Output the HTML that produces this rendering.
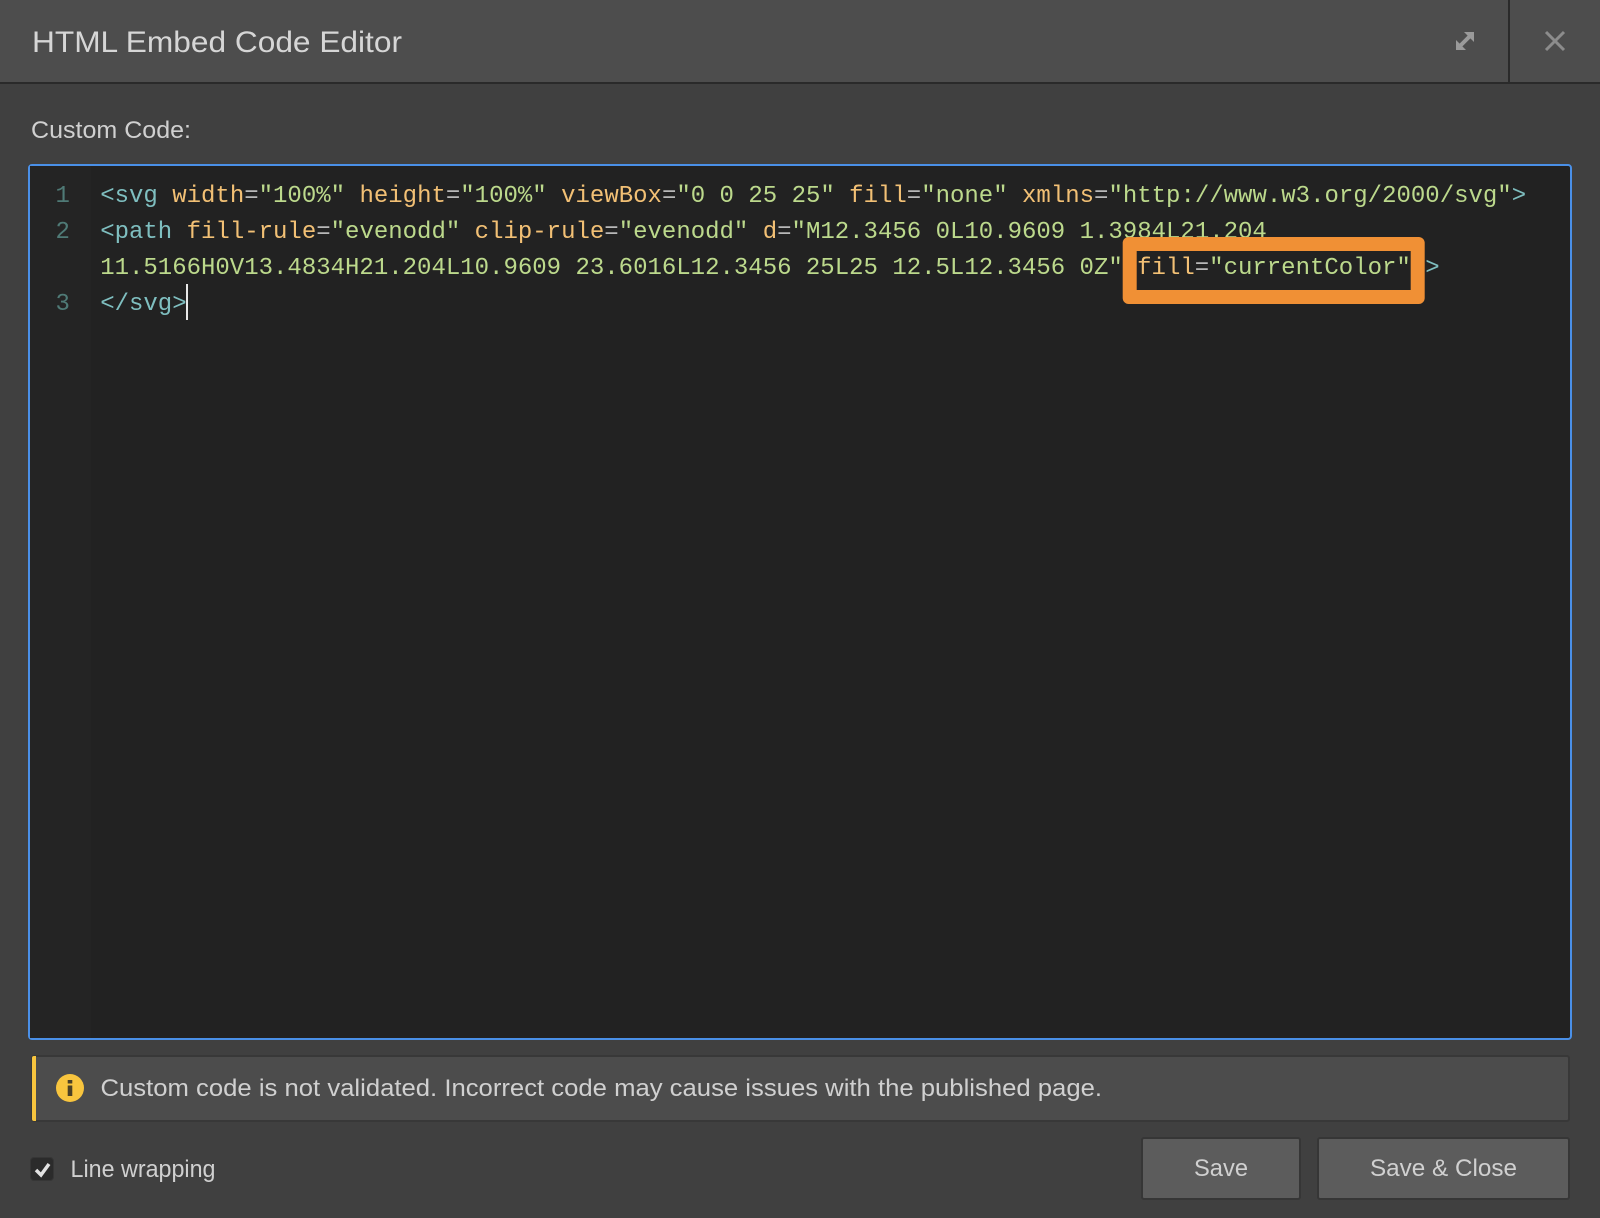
<!DOCTYPE html>
<html lang="en">
<head>
<meta charset="utf-8">
<title>HTML Embed Code Editor</title>
<style>
html,body{margin:0;padding:0;background:#404040;width:1600px;height:1218px;overflow:hidden}
.a{position:absolute;box-sizing:border-box}
svg{position:absolute;left:0;top:0}
text{white-space:pre}
.s{font-family:"Liberation Sans",sans-serif;font-size:24px;fill:#d0d0d0}
.m{font-family:"Liberation Mono",monospace;font-size:24px;fill:#bcd98c}
.t{fill:#7fbfc0}.k{fill:#f2c075}.e{fill:#b8b8b8}.n{fill:#4f7a76}
</style>
</head>
<body>
<div class="a" style="left:0;top:0;width:1600px;height:1218px;background:#404040"></div>
<div class="a" style="left:0;top:0;width:1600px;height:84px;background:#4d4d4d;border-bottom:2px solid #2a2a2a"></div>
<div class="a" style="left:1508px;top:0;width:2px;height:82px;background:#2a2a2a"></div>
<div class="a" style="left:28px;top:164px;width:1544px;height:876px;background:#222;border:2px solid #4a90e8;border-radius:4px"></div>
<div class="a" style="left:30px;top:166px;width:61px;height:872px;background:#242424"></div>
<div class="a" style="left:31px;top:1055px;width:1539px;height:67px;background:#4c4c4c;border:2px solid #383838;border-radius:3px"></div>
<div class="a" style="left:32px;top:1056px;width:4px;height:65px;background:#f8c53e;border-radius:2px 0 0 2px"></div>
<div class="a" style="left:1141px;top:1137px;width:160px;height:63px;background:#5c5c5c;border:2px solid #363636;border-radius:3px"></div>
<div class="a" style="left:1317px;top:1137px;width:253px;height:63px;background:#5c5c5c;border:2px solid #363636;border-radius:3px"></div>
<div class="a" style="left:30px;top:1157px;width:24px;height:24px;background:#2b2b2b;border:1px solid #363636;border-radius:4px"></div>
<svg width="1600" height="1218" viewBox="0 0 1600 1218" xmlns="http://www.w3.org/2000/svg">
  <text class="s" x="32" y="52" style="font-size:30px;fill:#d6d6d6" textLength="370" lengthAdjust="spacingAndGlyphs">HTML Embed Code Editor</text>
  <text class="s" x="31" y="138" textLength="160" lengthAdjust="spacingAndGlyphs">Custom Code:</text>

  <path d="M1459.500 46.500L1470.500 35.500" stroke="#9a9a9a" stroke-width="4" fill="none"/>
  <path d="M1456 40V50H1466ZM1464 32H1474V42Z" fill="#9a9a9a"/>
  <path d="M1546 32L1564 50M1564 32L1546 50" stroke="#8c8c8c" stroke-width="3" fill="none"/>

  <text class="m n" x="55.500" y="202">1</text>
  <text class="m n" x="55.500" y="238">2</text>
  <text class="m n" x="55.500" y="310">3</text>

  <text class="m" x="100.200" y="202"><tspan class="t">&lt;svg</tspan> <tspan class="k">width</tspan><tspan class="e">=</tspan>"100%" <tspan class="k">height</tspan><tspan class="e">=</tspan>"100%" <tspan class="k">viewBox</tspan><tspan class="e">=</tspan>"0 0 25 25" <tspan class="k">fill</tspan><tspan class="e">=</tspan>"none" <tspan class="k">xmlns</tspan><tspan class="e">=</tspan>"http://www.w3.org/2000/svg"<tspan class="t">&gt;</tspan></text>
  <text class="m" x="100.200" y="238"><tspan class="t">&lt;path</tspan> <tspan class="k">fill-rule</tspan><tspan class="e">=</tspan>"evenodd" <tspan class="k">clip-rule</tspan><tspan class="e">=</tspan>"evenodd" <tspan class="k">d</tspan><tspan class="e">=</tspan>"M12.3456 0L10.9609 1.3984L21.204</text>
  <text class="m" x="100.200" y="274">11.5166H0V13.4834H21.204L10.9609 23.6016L12.3456 25L25 12.5L12.3456 0Z" <tspan class="k">fill</tspan><tspan class="e">=</tspan>"currentColor" <tspan class="t">&gt;</tspan></text>
  <text class="m" x="100.200" y="310"><tspan class="t">&lt;/svg&gt;</tspan></text>
  <rect x="186" y="284" width="2" height="36" fill="#e8e8e8"/>

  <path fill-rule="evenodd" d="M1128.700 237H1418.700A6 6 0 0 1 1424.700 243V298A6 6 0 0 1 1418.700 304H1128.700A6 6 0 0 1 1122.700 298V243A6 6 0 0 1 1128.700 237ZM1136.700 251V290H1410.700V251Z" fill="#f09035"/>

  <circle cx="70" cy="1088" r="14" fill="#f8c53e"/>
  <path d="M67.700 1080H72.300V1083.500H67.700ZM67.700 1085.500H72.300V1096H67.700Z" fill="#4a4026"/>
  <text class="s" x="100.500" y="1096" textLength="1001.500" lengthAdjust="spacingAndGlyphs">Custom code is not validated. Incorrect code may cause issues with the published page.</text>

  <path d="M36 1170L41 1175L49 1164" stroke="#e2e2e2" stroke-width="3.500" fill="none"/>
  <text class="s" x="70.500" y="1177" textLength="145" lengthAdjust="spacingAndGlyphs">Line wrapping</text>
  <text class="s" x="1194" y="1176" textLength="54" lengthAdjust="spacingAndGlyphs">Save</text>
  <text class="s" x="1370" y="1176" textLength="147" lengthAdjust="spacingAndGlyphs">Save &amp; Close</text>
</svg>
</body>
</html>
